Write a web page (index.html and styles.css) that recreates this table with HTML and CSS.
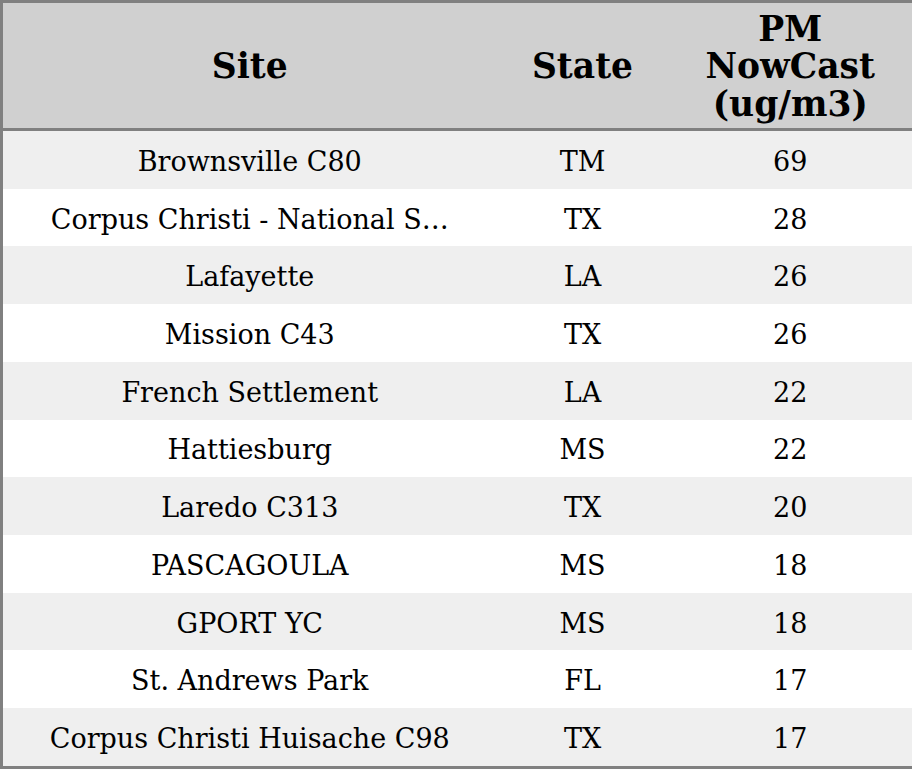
FILE: index.html
```html
<!DOCTYPE html>
<html>
<head>
<meta charset="utf-8">
<link rel="stylesheet" href="styles.css">
</head>
<body>
<table class="grid">
  <colgroup>
    <col class="c-site"><col class="c-state"><col class="c-pm">
  </colgroup>
  <thead>
    <tr class="head"><th>Site</th><th>State</th><th>PM<br>NowCast<br>(ug/m3)</th></tr>
  </thead>
  <tbody>
    <tr><td>Brownsville C80</td><td>TM</td><td>69</td></tr>
    <tr><td>Corpus Christi - National S…</td><td>TX</td><td>28</td></tr>
    <tr><td>Lafayette</td><td>LA</td><td>26</td></tr>
    <tr><td>Mission C43</td><td>TX</td><td>26</td></tr>
    <tr><td>French Settlement</td><td>LA</td><td>22</td></tr>
    <tr><td>Hattiesburg</td><td>MS</td><td>22</td></tr>
    <tr><td>Laredo C313</td><td>TX</td><td>20</td></tr>
    <tr><td>PASCAGOULA</td><td>MS</td><td>18</td></tr>
    <tr><td>GPORT YC</td><td>MS</td><td>18</td></tr>
    <tr><td>St. Andrews Park</td><td>FL</td><td>17</td></tr>
    <tr><td>Corpus Christi Huisache C98</td><td>TX</td><td>17</td></tr>
  </tbody>
</table>
</body>
</html>
```
FILE: styles.css
```css
html, body { margin: 0; padding: 0; background: #fff; }
.grid {
  width: 912px;
  height: 769px;
  border-collapse: collapse;
  border: 3px solid #808080;
  table-layout: fixed;
  font-family: "DejaVu Serif", serif;
  color: #000;
}
.c-site { width: 495px; }
.c-state { width: 172px; }
.c-pm { width: 245px; }
.grid th {
  background: #d0d0d0;
  font-size: 34.5px;
  font-weight: bold;
  line-height: 37.5px;
  height: 122px;
  padding: 3px 0 0;
  border-bottom: 3px solid #808080;
  text-align: center;
  vertical-align: middle;
}
.grid td {
  font-size: 27px;
  height: 54.7px;
  padding: 3px 0 0;
  text-align: center;
  vertical-align: middle;
  white-space: nowrap;
}
.grid tbody tr:nth-child(odd) td { background: #efefef; }
.grid tbody tr:nth-child(even) td { background: #ffffff; }
```
